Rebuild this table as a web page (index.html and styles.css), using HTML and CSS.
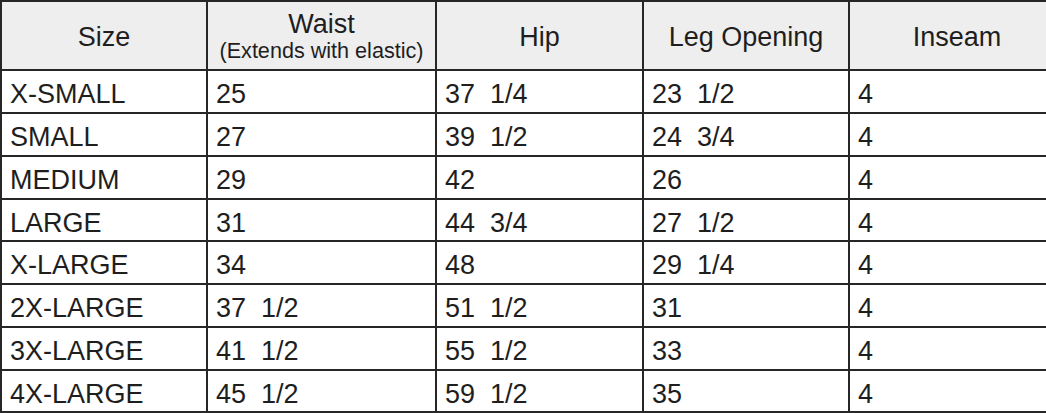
FILE: index.html
```html
<!DOCTYPE html>
<html lang="en">
<head>
<meta charset="utf-8">
<title>Size Chart</title>
<link rel="stylesheet" href="styles.css">
</head>
<body>
<table class="size-chart">
  <thead>
    <tr>
      <th class="c1">Size</th>
      <th class="c2"><span class="head-main">Waist</span><span class="head-sub">(Extends with elastic)</span></th>
      <th class="c3">Hip</th>
      <th class="c4">Leg Opening</th>
      <th class="c5">Inseam</th>
    </tr>
  </thead>
  <tbody>
    <tr><td>X-SMALL</td><td>25</td><td>37  1/4</td><td>23  1/2</td><td>4</td></tr>
    <tr><td>SMALL</td><td>27</td><td>39  1/2</td><td>24  3/4</td><td>4</td></tr>
    <tr><td>MEDIUM</td><td>29</td><td>42</td><td>26</td><td>4</td></tr>
    <tr><td>LARGE</td><td>31</td><td>44  3/4</td><td>27  1/2</td><td>4</td></tr>
    <tr><td>X-LARGE</td><td>34</td><td>48</td><td>29  1/4</td><td>4</td></tr>
    <tr><td>2X-LARGE</td><td>37  1/2</td><td>51  1/2</td><td>31</td><td>4</td></tr>
    <tr><td>3X-LARGE</td><td>41  1/2</td><td>55  1/2</td><td>33</td><td>4</td></tr>
    <tr><td>4X-LARGE</td><td>45  1/2</td><td>59  1/2</td><td>35</td><td>4</td></tr>
  </tbody>
</table>
</body>
</html>
```

FILE: styles.css
```css
html, body {
  margin: 0;
  padding: 0;
  overflow: hidden;
  background: #ffffff;
}

.size-chart {
  border-collapse: separate;
  border-spacing: 0;
  table-layout: fixed;
  width: 1066px;
  border-top: 2px solid #262626;
  border-left: 2px solid #262626;
  font-family: "Liberation Sans", Arial, sans-serif;
  color: #1e1e1e;
}

.size-chart th,
.size-chart td {
  box-sizing: border-box;
  border-right: 2px solid #262626;
  border-bottom: 2px solid #262626;
  padding: 0 0 0 8px;
  white-space: pre;
  vertical-align: middle;
}

.size-chart th {
  height: 69px;
  background: #eeeeee;
  font-weight: normal;
  font-size: 27px;
  line-height: 28px;
  text-align: center;
  padding: 2px 0 0;
}

.size-chart td {
  height: 43px;
  font-size: 27px;
  line-height: 30px;
  text-align: left;
  padding-top: 5px;
}

.size-chart tbody tr:nth-child(4n) td {
  height: 42px;
}

.c1 { width: 206px; }
.c2 { width: 229px; }
.c3 { width: 207px; }
.c4 { width: 206px; }
.c5 { width: 216px; }

.head-main {
  display: block;
  line-height: 28px;
}

.head-sub {
  display: block;
  font-size: 21.6px;
  line-height: 26px;
}
```
